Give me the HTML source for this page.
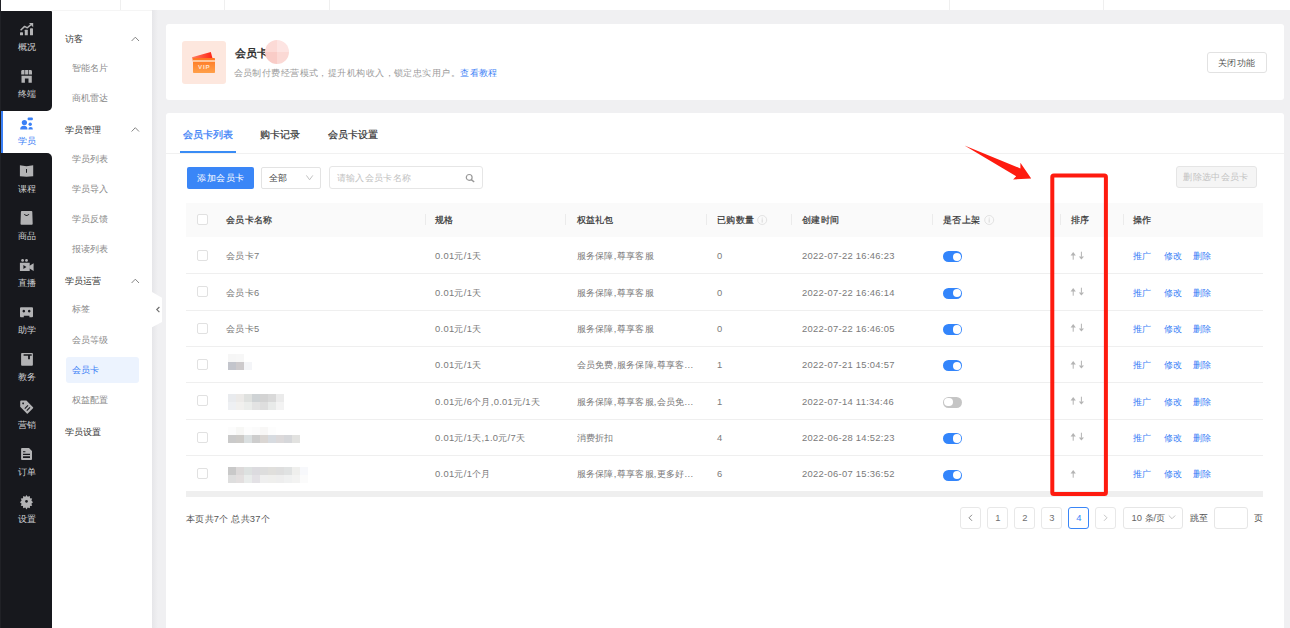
<!DOCTYPE html>
<html><head><meta charset="utf-8">
<style>
*{box-sizing:border-box;margin:0;padding:0}
html,body{width:1290px;height:628px;overflow:hidden}
body{position:relative;background:#f0f0f2;font-family:"Liberation Sans",sans-serif;color:#333}
.a,.t,.h,.s,.c{position:absolute;white-space:nowrap}
#top{left:0;top:0;width:1290px;height:10px;background:#fff}
.sep{position:absolute;top:0;width:1px;height:10px;background:#efefef}
.t{left:1px;width:52px;text-align:center;font-size:9px;line-height:10px;color:#cfd0d3;padding-top:1px}
.h{left:65px;font-size:9.4px;line-height:10px;color:#333}
.s{left:72px;font-size:9.4px;line-height:10px;color:#8a8a8a}
.c{font-size:9.4px;line-height:10px;color:#7a7a7a;letter-spacing:.3px}
.card{position:absolute;background:#fff;border-radius:3px}
.th{position:absolute;font-size:9.4px;line-height:10px;color:#333;font-weight:normal;-webkit-text-stroke:.2px #333;letter-spacing:.3px;white-space:nowrap}
.vs{position:absolute;top:214px;width:1px;height:11px;background:#ebebeb}
.rl{position:absolute;left:186px;width:1077px;height:1px;background:#efefef}
.cb{position:absolute;left:197px;width:11px;height:11px;border:1px solid #e1e1e1;border-radius:2px;background:#fff}
.sw{position:absolute;left:943px;width:19.4px;height:11px;border-radius:6px;background:#3385fb}
.sw:after{content:"";position:absolute;left:9.6px;top:1.3px;width:8.4px;height:8.4px;border-radius:50%;background:#fff}
.sw.off{background:#c5c5c5}
.sw.off:after{left:1.4px}
.op{position:absolute;font-size:9.4px;line-height:10px;color:#3a80f6;white-space:nowrap}
.pg{position:absolute;top:507px;width:21px;height:21.5px;border:1px solid #e8e8e8;border-radius:3px;font-size:9.4px;line-height:19.5px;text-align:center;color:#707070;background:#fff}
.mz{position:absolute;width:8px;height:8px}
</style></head><body>
<div id="top" class="a">
<i class="sep" style="left:120px"></i><i class="sep" style="left:224px"></i><i class="sep" style="left:329px"></i><i class="sep" style="left:949px"></i><i class="sep" style="left:1103px"></i>
</div>
<!-- primary nav -->
<div class="a" style="left:0;top:10px;width:52px;height:618px;background:#fff"></div>
<div class="a" style="left:0;top:10.8px;width:52px;height:100.2px;background:#17181d;border-radius:0 1px 5px 0"></div>
<div class="a" style="left:0;top:153px;width:52px;height:475px;background:#17181d;border-radius:0 5px 0 0"></div>
<div class="a" style="left:1px;top:111px;width:2px;height:42px;background:#3a80f6"></div>
<div class="a" style="left:0;top:0;width:1px;height:628px;background:#202126"></div>
<div class="t" style="top:41.0px">概况</div>
<div class="t" style="top:88.2px">终端</div>
<div class="t" style="top:135.4px;color:#3a80f6">学员</div>
<div class="t" style="top:182.6px">课程</div>
<div class="t" style="top:229.8px">商品</div>
<div class="t" style="top:277.0px">直播</div>
<div class="t" style="top:324.2px">助学</div>
<div class="t" style="top:371.4px">教务</div>
<div class="t" style="top:418.6px">营销</div>
<div class="t" style="top:465.8px">订单</div>
<div class="t" style="top:513.0px">设置</div>
<svg class="a" style="left:0;top:0" width="52" height="628" viewBox="0 0 52 628">
<g fill="#b3b3b5" stroke="none">
<!-- chart -->
<rect x="20" y="32.3" width="3" height="3" rx=".4"/>
<rect x="24.8" y="29.8" width="3" height="5.5" rx=".4"/>
<rect x="30" y="28.3" width="3" height="7" rx=".4"/>
<polyline points="20.6,30.2 24.6,26.4 27.3,27.8 31,24.6" fill="none" stroke="#b3b3b5" stroke-width="1.5" stroke-linejoin="round"/>
<polygon points="29,23 33.2,23 33.2,27.2"/>
<!-- store -->
<path d="M22.6,70 h1.9 v4.5 h-3.3 v-3.1 q0,-1.4 1.4,-1.4 z"/><path d="M25.1,70 h3 v4.5 h-3 z"/><path d="M28.7,70 h1.9 q1.4,0 1.4,1.4 v3.1 h-3.3 z"/>
<path d="M21.5,75.8 h10.3 v6.9 h-3.3 v-4.3 h-3.6 v4.3 h-3.4 z"/>
<!-- book -->
<path d="M19.9,165.2 l6.6,1 l6.7,-1 v11 l-6.7,.6 l-6.6,-.6 z M26,169 v3.8 h1 v-3.8 z" fill-rule="evenodd"/>
<!-- bag -->
<path d="M21.8,211 h9.6 q.8,0 .9,.8 l.4,12 q0,.9 -.9,.9 h-10.4 q-.9,0 -.9,-.9 l.4,-12 q.1,-.8 .9,-.8 z M23.8,214.3 q2.8,3.6 5.6,0 l-.8,-.4 q-2,2.2 -4,0 z" fill-rule="evenodd"/>
<!-- camera -->
<circle cx="22.6" cy="260.4" r="1.4"/><circle cx="26.5" cy="260.4" r="1.4"/>
<path d="M19.9,262.8 h9.8 v8.3 h-9.8 z M23.4,265 v4 l3,-2 z" fill-rule="evenodd"/>
<polygon points="29.2,266 33.6,263.2 33.6,271 29.2,268.2"/>
<!-- assist -->
<path d="M21,307.2 h11 q1,0 1,1 v8.1 q0,1 -1,1 h-2.6 v-1.6 h-5.6 v1.6 h-2.8 q-1,0 -1,-1 v-8.1 q0,-1 1,-1 z M23.8,309.8 a1.3,1.3 0 1 0 .01,0 z M29.2,309.8 a1.3,1.3 0 1 0 .01,0 z" fill-rule="evenodd"/>
<!-- edu -->
<path d="M22,352.9 h10 q.9,0 .9,.9 v11 q0,.9 -.9,.9 h-10 q-.9,0 -.9,-.9 v-11 q0,-.9 .9,-.9 z M23.6,354.3 v1.4 h4.5 v3.6 h1.8 v-3.6 h1.8 v-1.4 z" fill-rule="evenodd"/>
<!-- tag -->
<path d="M21.2,400.6 h5.2 l6.6,6.6 q.5,.5 0,1 l-5.2,5.2 q-.5,.5 -1,0 l-6.6,-6.6 v-5.2 q0,-1 1,-1 z M23.1,402.4 a.9,.9 0 1 0 .01,0 z M24.4,408.2 l.8,.8 l3.2,-3.2 l-.8,-.8 z M26.4,410.2 l.8,.8 l3.2,-3.2 l-.8,-.8 z" fill-rule="evenodd"/>
<!-- doc -->
<path d="M22,447.9 h7 l3,3 v8.2 q0,.9 -.9,.9 h-9.1 q-.9,0 -.9,-.9 v-10.3 q0,-.9 .9,-.9 z M23,451.2 v1 h2.4 v-1 z M23,453.8 v1.2 h7 v-1.2 z M23,456.3 v1.6 h7 v-1.6 z" fill-rule="evenodd"/>
<!-- gear -->
<path d="M26.5,494.9 l1.2,1.9 l2.1,-.8 l.2,2.2 l2.2,.3 l-.8,2.1 l1.6,1.6 l-1.6,1.5 l.8,2.1 l-2.2,.3 l-.2,2.2 l-2.1,-.8 l-1.2,1.9 l-1.2,-1.9 l-2.1,.8 l-.2,-2.2 l-2.2,-.3 l.8,-2.1 l-1.6,-1.5 l1.6,-1.6 l-.8,-2.1 l2.2,-.3 l.2,-2.2 l2.1,.8 z M26.5,499.9 a1.4,1.4 0 1 0 .01,0 z" fill-rule="evenodd"/>
</g>
<g fill="#3a80f6">
<circle cx="24.4" cy="122.6" r="2.6"/>
<path d="M20.2,129.4 a3.65,3.65 0 0 1 7.3,0 z"/>
<circle cx="30.2" cy="124.2" r="1.7"/>
<path d="M28.3,129.4 a2.3,2.3 0 0 1 4.6,0 z"/>
<rect x="27.6" y="117.6" width="5.3" height="2.6" rx="1"/>
</g>
</svg>
<!-- secondary nav -->
<div class="a" style="left:52px;top:10px;width:100px;height:618px;background:#fff"></div>
<div class="a" style="left:52px;top:10px;width:100px;height:1px;background:#f5f5f5"></div>
<div class="h" style="top:34px">访客</div>
<div class="s" style="top:63px">智能名片</div>
<div class="s" style="top:93px">商机雷达</div>
<div class="h" style="top:125px">学员管理</div>
<div class="s" style="top:154px">学员列表</div>
<div class="s" style="top:184px">学员导入</div>
<div class="s" style="top:214px">学员反馈</div>
<div class="s" style="top:244px">报读列表</div>
<div class="h" style="top:276px">学员运营</div>
<div class="s" style="top:304px">标签</div>
<div class="a" style="left:66px;top:356.6px;width:73px;height:26px;background:#ecf3fe;border-radius:3px"></div>
<div class="s" style="top:335px">会员等级</div>
<div class="s" style="top:365px;color:#3a80f6">会员卡</div>
<div class="s" style="top:395px">权益配置</div>
<div class="h" style="top:427px">学员设置</div>
<svg class="a" style="left:130px;top:30px" width="12" height="270" viewBox="0 0 12 270">
<g fill="none" stroke="#777" stroke-width=".9">
<polyline points="1.6,11 5.3,7.2 9,11"/>
<polyline points="1.6,101.5 5.3,97.7 9,101.5"/>
<polyline points="1.6,253 5.3,249.2 9,253"/>
</g>
</svg>
<!-- collapse handle -->
<div class="a" style="left:152px;top:10px;width:6px;height:618px;background:linear-gradient(90deg,#e6e6e9,#f0f0f2)"></div>
<svg class="a" style="left:152px;top:290px" width="12" height="40" viewBox="0 0 12 40">
<path d="M0,2 L10,7.7 V32 L0,37.3 Z" fill="#fff"/>
<polyline points="7.4,17 4.8,19.6 7.4,22.2" fill="none" stroke="#707070" stroke-width="1.2"/>
</svg>

<!-- card 1 -->
<div class="card" style="left:166px;top:24px;width:1117.8px;height:75.8px"></div>
<div class="a" style="left:182px;top:40.5px;width:43.5px;height:43px;background:#fde7de;border-radius:3px"></div>
<svg class="a" style="left:182px;top:40px" width="44" height="44" viewBox="0 0 44 44">
<defs><linearGradient id="g1" x1="0" y1="0" x2="1" y2="0"><stop offset="0" stop-color="#ff7d60"/><stop offset="1" stop-color="#ff2414"/></linearGradient>
<linearGradient id="g2" x1="0" y1="0" x2="0" y2="1"><stop offset="0" stop-color="#ff7420"/><stop offset="1" stop-color="#ffa04a"/></linearGradient></defs>
<polygon points="10,17.2 28.8,12 30.6,18.5 11,22" fill="url(#g1)"/>
<rect x="11" y="17.9" width="22" height="15.1" rx=".8" fill="url(#g2)"/>
<rect x="11" y="20" width="22" height="2" fill="#ffc79c"/>
<text x="22.3" y="29.4" font-size="6.2" font-weight="bold" letter-spacing=".9" fill="#ffe2cf" text-anchor="middle" font-family="Liberation Sans">VIP</text>
</svg>
<div class="a" style="left:234.5px;top:47px;font-size:11px;line-height:13px;font-weight:normal;-webkit-text-stroke:.4px #2a2a2a;color:#2a2a2a">会员卡</div>
<div class="a" style="left:265px;top:40px;width:24px;height:24px;border-radius:50%;overflow:hidden">
<div class="a" style="left:0;top:0;width:12px;height:12px;background:#fcdad6"></div>
<div class="a" style="left:12px;top:0;width:12px;height:12px;background:#fde4e2"></div>
<div class="a" style="left:0;top:12px;width:12px;height:12px;background:#f9ccc7"></div>
<div class="a" style="left:12px;top:12px;width:12px;height:12px;background:#fbd9d5"></div>
</div>
<div class="a" style="left:233.5px;top:67.5px;font-size:9px;letter-spacing:.44px;line-height:10px;color:#9b9b9b">会员制付费经营模式，提升机构收入，锁定忠实用户。<span style="color:#3a80f6">查看教程</span></div>
<div class="a" style="left:1206.5px;top:51.5px;width:60.5px;height:21.5px;border:1px solid #e2e2e2;border-radius:3px;font-size:9.4px;letter-spacing:.3px;line-height:19.5px;text-align:center;color:#555">关闭功能</div>

<!-- card 2 -->
<div class="card" style="left:166px;top:113px;width:1117.8px;height:515px;border-radius:3px 3px 0 0"></div>
<div class="a" style="left:182.5px;top:129px;font-size:10px;line-height:11px;color:#3a80f6;-webkit-text-stroke:.25px #3a80f6">会员卡列表</div>
<div class="a" style="left:259.5px;top:129px;font-size:10px;line-height:11px;color:#333;-webkit-text-stroke:.2px #333">购卡记录</div>
<div class="a" style="left:327.5px;top:129px;font-size:10px;line-height:11px;color:#333;-webkit-text-stroke:.2px #333">会员卡设置</div>
<div class="a" style="left:166px;top:153px;width:1117.8px;height:1px;background:#f1f1f1"></div>
<div class="a" style="left:180px;top:151px;width:56px;height:2.2px;background:#3a8cf5"></div>
<div class="a" style="left:187px;top:167.4px;width:67px;height:21.4px;background:#3a86f7;border-radius:2px;color:#fff;font-size:9.4px;letter-spacing:.5px;text-indent:.5px;line-height:21.4px;text-align:center">添加会员卡</div>
<div class="a" style="left:260.5px;top:167px;width:60.5px;height:22px;border:1px solid #e3e3e3;border-radius:2px"></div>
<div class="a" style="left:269px;top:173px;font-size:9.4px;line-height:10px;color:#444">全部</div>
<svg class="a" style="left:305px;top:174px" width="10" height="8" viewBox="0 0 10 8"><polyline points="1.4,1.4 4.6,5.8 7.8,1.4" fill="none" stroke="#bbb" stroke-width=".9"/></svg>
<div class="a" style="left:329px;top:166.3px;width:154px;height:22.3px;border:1px solid #e6e6e6;border-radius:3px"></div>
<div class="a" style="left:336.5px;top:173px;font-size:9.4px;letter-spacing:.4px;line-height:10px;color:#c2c2c2">请输入会员卡名称</div>
<svg class="a" style="left:464px;top:172px" width="12" height="12" viewBox="0 0 12 12"><circle cx="5.2" cy="5.4" r="2.9" fill="none" stroke="#999" stroke-width="1.2"/><line x1="7.3" y1="7.6" x2="10.2" y2="10" stroke="#999" stroke-width="1.4"/></svg>
<div class="a" style="left:1175.5px;top:166px;width:81px;height:22px;background:#f5f5f5;border:1px solid #e5e5e5;border-radius:3px;font-size:9.4px;letter-spacing:.35px;line-height:20px;text-align:center;color:#c3c3c3">删除选中会员卡</div>

<!-- table -->
<div class="a" style="left:186px;top:203px;width:1077px;height:34.4px;background:#fafafa"></div>
<div class="cb" style="top:214.3px"></div>
<div class="th" style="left:226px;top:214.5px">会员卡名称</div>
<div class="vs" style="left:425px"></div>
<div class="th" style="left:435px;top:214.5px">规格</div>
<div class="vs" style="left:565px"></div>
<div class="th" style="left:576.5px;top:214.5px">权益礼包</div>
<div class="vs" style="left:706px"></div>
<div class="th" style="left:717px;top:214.5px">已购数量</div>
<svg class="a" style="left:757px;top:215px" width="11" height="11" viewBox="0 0 11 11"><circle cx="5.2" cy="5" r="4.5" fill="none" stroke="#dcdcdc" stroke-width=".8"/><line x1="5.2" y1="4.2" x2="5.2" y2="7.6" stroke="#d0d0d0" stroke-width=".8"/><circle cx="5.2" cy="2.9" r=".5" fill="#d0d0d0"/></svg>
<div class="vs" style="left:791px"></div>
<div class="th" style="left:802px;top:214.5px">创建时间</div>
<div class="vs" style="left:932px"></div>
<div class="th" style="left:943px;top:214.5px">是否上架</div>
<svg class="a" style="left:984px;top:215px" width="11" height="11" viewBox="0 0 11 11"><circle cx="5.2" cy="5" r="4.5" fill="none" stroke="#dcdcdc" stroke-width=".8"/><line x1="5.2" y1="4.2" x2="5.2" y2="7.6" stroke="#d0d0d0" stroke-width=".8"/><circle cx="5.2" cy="2.9" r=".5" fill="#d0d0d0"/></svg>
<div class="vs" style="left:1060px"></div>
<div class="th" style="left:1070.5px;top:214.5px">排序</div>
<div class="vs" style="left:1123px"></div>
<div class="th" style="left:1132.5px;top:214.5px">操作</div>
<div id="rows"></div>
<!--ROWS-->
<div class="cb" style="top:249.9px"></div>
<div class="c" style="left:226px;top:251.3px">会员卡7</div>
<div class="c" style="left:435px;top:251.3px">0.01元/1天</div>
<div class="c" style="left:576.5px;top:251.3px">服务保障,尊享客服</div>
<div class="c" style="left:717px;top:251.3px">0</div>
<div class="c" style="left:802px;top:251.3px">2022-07-22 16:46:23</div>
<div class="sw" style="top:251.4px"></div>
<svg class="a" style="left:1068px;top:248.6px" width="20" height="14" viewBox="1068 248.6 20 14"><g fill="#b4b4b4"><polygon points="1070.6,255 1073.2,251.7 1075.8,255"/><rect x="1072.7" y="254.5" width="1" height="4.8"/><rect x="1080.9" y="251.3" width="1" height="5"/><polygon points="1078.8,256 1084,256 1081.4,259.2"/></g></svg>
<div class="op" style="left:1132.5px;top:251.3px">推广</div>
<div class="op" style="left:1163.5px;top:251.3px">修改</div>
<div class="op" style="left:1193px;top:251.3px">删除</div>
<div class="rl" style="top:273.2px"></div>
<div class="cb" style="top:286.2px"></div>
<div class="c" style="left:226px;top:287.6px">会员卡6</div>
<div class="c" style="left:435px;top:287.6px">0.01元/1天</div>
<div class="c" style="left:576.5px;top:287.6px">服务保障,尊享客服</div>
<div class="c" style="left:717px;top:287.6px">0</div>
<div class="c" style="left:802px;top:287.6px">2022-07-22 16:46:14</div>
<div class="sw" style="top:287.7px"></div>
<svg class="a" style="left:1068px;top:284.9px" width="20" height="14" viewBox="1068 248.6 20 14"><g fill="#b4b4b4"><polygon points="1070.6,255 1073.2,251.7 1075.8,255"/><rect x="1072.7" y="254.5" width="1" height="4.8"/><rect x="1080.9" y="251.3" width="1" height="5"/><polygon points="1078.8,256 1084,256 1081.4,259.2"/></g></svg>
<div class="op" style="left:1132.5px;top:287.6px">推广</div>
<div class="op" style="left:1163.5px;top:287.6px">修改</div>
<div class="op" style="left:1193px;top:287.6px">删除</div>
<div class="rl" style="top:309.6px"></div>
<div class="cb" style="top:322.6px"></div>
<div class="c" style="left:226px;top:324.0px">会员卡5</div>
<div class="c" style="left:435px;top:324.0px">0.01元/1天</div>
<div class="c" style="left:576.5px;top:324.0px">服务保障,尊享客服</div>
<div class="c" style="left:717px;top:324.0px">0</div>
<div class="c" style="left:802px;top:324.0px">2022-07-22 16:46:05</div>
<div class="sw" style="top:324.1px"></div>
<svg class="a" style="left:1068px;top:321.3px" width="20" height="14" viewBox="1068 248.6 20 14"><g fill="#b4b4b4"><polygon points="1070.6,255 1073.2,251.7 1075.8,255"/><rect x="1072.7" y="254.5" width="1" height="4.8"/><rect x="1080.9" y="251.3" width="1" height="5"/><polygon points="1078.8,256 1084,256 1081.4,259.2"/></g></svg>
<div class="op" style="left:1132.5px;top:324.0px">推广</div>
<div class="op" style="left:1163.5px;top:324.0px">修改</div>
<div class="op" style="left:1193px;top:324.0px">删除</div>
<div class="rl" style="top:346.0px"></div>
<div class="cb" style="top:358.9px"></div>
<div class="mz" style="left:228px;top:353.8px;background:#f6f6f6"></div>
<div class="mz" style="left:236px;top:353.8px;background:#f7f7f7"></div>
<div class="mz" style="left:244px;top:353.8px;background:#fff"></div>
<div class="mz" style="left:228px;top:361.8px;background:#c3c5cc"></div>
<div class="mz" style="left:236px;top:361.8px;background:#cdcacc"></div>
<div class="mz" style="left:244px;top:361.8px;background:#f4f5f8"></div>
<div class="c" style="left:435px;top:360.3px">0.01元/1天</div>
<div class="c" style="left:576.5px;top:360.3px">会员免费,服务保障,尊享客...</div>
<div class="c" style="left:717px;top:360.3px">1</div>
<div class="c" style="left:802px;top:360.3px">2022-07-21 15:04:57</div>
<div class="sw" style="top:360.4px"></div>
<svg class="a" style="left:1068px;top:357.6px" width="20" height="14" viewBox="1068 248.6 20 14"><g fill="#b4b4b4"><polygon points="1070.6,255 1073.2,251.7 1075.8,255"/><rect x="1072.7" y="254.5" width="1" height="4.8"/><rect x="1080.9" y="251.3" width="1" height="5"/><polygon points="1078.8,256 1084,256 1081.4,259.2"/></g></svg>
<div class="op" style="left:1132.5px;top:360.3px">推广</div>
<div class="op" style="left:1163.5px;top:360.3px">修改</div>
<div class="op" style="left:1193px;top:360.3px">删除</div>
<div class="rl" style="top:382.3px"></div>
<div class="cb" style="top:395.3px"></div>
<div class="mz" style="left:228px;top:394.1px;background:#e9ebee"></div>
<div class="mz" style="left:236px;top:394.1px;background:#eceae8"></div>
<div class="mz" style="left:244px;top:394.1px;background:#dfe1df"></div>
<div class="mz" style="left:252px;top:394.1px;background:#cfd3d5"></div>
<div class="mz" style="left:260px;top:394.1px;background:#d3d3d3"></div>
<div class="mz" style="left:268px;top:394.1px;background:#d9d9d9"></div>
<div class="mz" style="left:276px;top:394.1px;background:#ebebeb"></div>
<div class="mz" style="left:228px;top:401.9px;background:#eef0f3"></div>
<div class="mz" style="left:236px;top:401.9px;background:#f1f0ee"></div>
<div class="mz" style="left:244px;top:401.9px;background:#ebedeb"></div>
<div class="mz" style="left:252px;top:401.9px;background:#e3e3e3"></div>
<div class="mz" style="left:260px;top:401.9px;background:#dedede"></div>
<div class="mz" style="left:268px;top:401.9px;background:#e8eae9"></div>
<div class="mz" style="left:276px;top:401.9px;background:#f3f3f3"></div>
<div class="c" style="left:435px;top:396.7px">0.01元/6个月,0.01元/1天</div>
<div class="c" style="left:576.5px;top:396.7px">服务保障,尊享客服,会员免...</div>
<div class="c" style="left:717px;top:396.7px">1</div>
<div class="c" style="left:802px;top:396.7px">2022-07-14 11:34:46</div>
<div class="sw off" style="top:396.8px"></div>
<svg class="a" style="left:1068px;top:394.0px" width="20" height="14" viewBox="1068 248.6 20 14"><g fill="#b4b4b4"><polygon points="1070.6,255 1073.2,251.7 1075.8,255"/><rect x="1072.7" y="254.5" width="1" height="4.8"/><rect x="1080.9" y="251.3" width="1" height="5"/><polygon points="1078.8,256 1084,256 1081.4,259.2"/></g></svg>
<div class="op" style="left:1132.5px;top:396.7px">推广</div>
<div class="op" style="left:1163.5px;top:396.7px">修改</div>
<div class="op" style="left:1193px;top:396.7px">删除</div>
<div class="rl" style="top:418.7px"></div>
<div class="cb" style="top:431.6px"></div>
<div class="mz" style="left:228px;top:426.5px;background:#fcfcfc"></div>
<div class="mz" style="left:236px;top:426.5px;background:#f7f7f5"></div>
<div class="mz" style="left:244px;top:426.5px;background:#fdfdfd"></div>
<div class="mz" style="left:252px;top:426.5px;background:#fbfbfb"></div>
<div class="mz" style="left:260px;top:426.5px;background:#f8f7f6"></div>
<div class="mz" style="left:268px;top:426.5px;background:#fdfdfd"></div>
<div class="mz" style="left:276px;top:426.5px;background:#fff"></div>
<div class="mz" style="left:284px;top:426.5px;background:#fff"></div>
<div class="mz" style="left:292px;top:426.5px;background:#fff"></div>
<div class="mz" style="left:228px;top:434.5px;background:#cacaca"></div>
<div class="mz" style="left:236px;top:434.5px;background:#cdcbc8"></div>
<div class="mz" style="left:244px;top:434.5px;background:#dadfe0"></div>
<div class="mz" style="left:252px;top:434.5px;background:#cdcdcd"></div>
<div class="mz" style="left:260px;top:434.5px;background:#dad6d3"></div>
<div class="mz" style="left:268px;top:434.5px;background:#d7dbe0"></div>
<div class="mz" style="left:276px;top:434.5px;background:#dcd9da"></div>
<div class="mz" style="left:284px;top:434.5px;background:#d6d7da"></div>
<div class="mz" style="left:292px;top:434.5px;background:#e2e2e0"></div>
<div class="c" style="left:435px;top:433.0px">0.01元/1天,1.0元/7天</div>
<div class="c" style="left:576.5px;top:433.0px">消费折扣</div>
<div class="c" style="left:717px;top:433.0px">4</div>
<div class="c" style="left:802px;top:433.0px">2022-06-28 14:52:23</div>
<div class="sw" style="top:433.1px"></div>
<svg class="a" style="left:1068px;top:430.3px" width="20" height="14" viewBox="1068 248.6 20 14"><g fill="#b4b4b4"><polygon points="1070.6,255 1073.2,251.7 1075.8,255"/><rect x="1072.7" y="254.5" width="1" height="4.8"/><rect x="1080.9" y="251.3" width="1" height="5"/><polygon points="1078.8,256 1084,256 1081.4,259.2"/></g></svg>
<div class="op" style="left:1132.5px;top:433.0px">推广</div>
<div class="op" style="left:1163.5px;top:433.0px">修改</div>
<div class="op" style="left:1193px;top:433.0px">删除</div>
<div class="rl" style="top:455.0px"></div>
<div class="cb" style="top:468.0px"></div>
<div class="mz" style="left:228px;top:466.8px;background:#c9c9c9"></div>
<div class="mz" style="left:236px;top:466.8px;background:#dcd9d9"></div>
<div class="mz" style="left:244px;top:466.8px;background:#dde1e0"></div>
<div class="mz" style="left:252px;top:466.8px;background:#dcdbdf"></div>
<div class="mz" style="left:260px;top:466.8px;background:#dddddd"></div>
<div class="mz" style="left:268px;top:466.8px;background:#e0dfdc"></div>
<div class="mz" style="left:276px;top:466.8px;background:#dedede"></div>
<div class="mz" style="left:284px;top:466.8px;background:#e0e2e2"></div>
<div class="mz" style="left:292px;top:466.8px;background:#efefed"></div>
<div class="mz" style="left:300px;top:466.8px;background:#f7f8fb"></div>
<div class="mz" style="left:228px;top:474.6px;background:#dedede"></div>
<div class="mz" style="left:236px;top:474.6px;background:#e3dfdf"></div>
<div class="mz" style="left:244px;top:474.6px;background:#e9eceb"></div>
<div class="mz" style="left:252px;top:474.6px;background:#e3e1e5"></div>
<div class="mz" style="left:260px;top:474.6px;background:#efefef"></div>
<div class="mz" style="left:268px;top:474.6px;background:#efefed"></div>
<div class="mz" style="left:276px;top:474.6px;background:#eeeeee"></div>
<div class="mz" style="left:284px;top:474.6px;background:#f0f1f1"></div>
<div class="mz" style="left:292px;top:474.6px;background:#f3f3f2"></div>
<div class="mz" style="left:300px;top:474.6px;background:#fbfbfb"></div>
<div class="c" style="left:435px;top:469.4px">0.01元/1个月</div>
<div class="c" style="left:576.5px;top:469.4px">服务保障,尊享客服,更多好...</div>
<div class="c" style="left:717px;top:469.4px">6</div>
<div class="c" style="left:802px;top:469.4px">2022-06-07 15:36:52</div>
<div class="sw" style="top:469.5px"></div>
<svg class="a" style="left:1068px;top:466.7px" width="20" height="14" viewBox="1068 248.6 20 14"><g fill="#b4b4b4"><polygon points="1070.6,255 1073.2,251.7 1075.8,255"/><rect x="1072.7" y="254.5" width="1" height="4.8"/></g></svg>
<div class="op" style="left:1132.5px;top:469.4px">推广</div>
<div class="op" style="left:1163.5px;top:469.4px">修改</div>
<div class="op" style="left:1193px;top:469.4px">删除</div>
<div class="rl" style="top:491.4px"></div>
<!--/ROWS-->
<div class="a" style="left:186px;top:491px;width:1077px;height:6px;background:#efefef"></div>
<div class="a" style="left:186px;top:513.5px;font-size:9.4px;letter-spacing:.25px;line-height:10px;color:#555">本页共7个 总共37个</div>

<!-- pagination -->
<div class="pg" style="left:960.3px"><svg width="19" height="19" viewBox="0 0 19 19" style="position:absolute;left:0;top:0"><polyline points="11,6.8 8,9.8 11,12.8" fill="none" stroke="#888" stroke-width="1"/></svg></div>
<div class="pg" style="left:987.3px">1</div>
<div class="pg" style="left:1014.3px">2</div>
<div class="pg" style="left:1041.3px">3</div>
<div class="pg" style="left:1068.3px;border-color:#3a86f7;color:#3a86f7">4</div>
<div class="pg" style="left:1095px"><svg width="19" height="19" viewBox="0 0 19 19" style="position:absolute;left:0;top:0"><polyline points="8,6.8 11,9.8 8,12.8" fill="none" stroke="#c5c5c5" stroke-width="1"/></svg></div>
<div class="a" style="left:1123px;top:507px;width:60px;height:22.3px;border:1px solid #e6e6e6;border-radius:3px"></div>
<div class="a" style="left:1131.5px;top:513px;font-size:9.4px;line-height:10px;color:#666">10 条/页</div>
<svg class="a" style="left:1167px;top:514px" width="10" height="8" viewBox="0 0 10 8"><polyline points="1.8,1.5 5,4.7 8.2,1.5" fill="none" stroke="#bbb" stroke-width=".9"/></svg>
<div class="a" style="left:1190px;top:513px;font-size:9.4px;line-height:10px;color:#555">跳至</div>
<div class="a" style="left:1214.3px;top:507px;width:34.2px;height:22.3px;border:1px solid #e6e6e6;border-radius:3px"></div>
<div class="a" style="left:1253.5px;top:513px;font-size:9.4px;line-height:10px;color:#555">页</div>

<!-- annotations -->
<svg class="a" style="left:0;top:0" width="1290" height="628" viewBox="0 0 1290 628">
<rect x="1052.3" y="175.5" width="53.6" height="318.4" rx="1.5" fill="none" stroke="#fe1b0f" stroke-width="4"/>
<polygon points="964.5,145.5 1020.4,168.4 1020.4,162.8 1031.2,178.4 1013.1,179.5 1016.2,176.2" fill="#fe1b0f"/>
</svg>
</body></html>
